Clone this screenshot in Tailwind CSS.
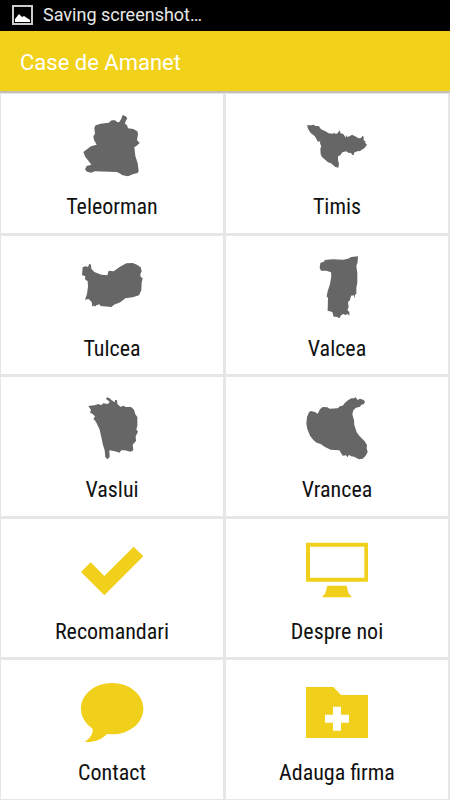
<!DOCTYPE html>
<html lang="ro">
<head>
    <meta charset="UTF-8">
    <meta name="viewport" content="width=device-width, initial-scale=1.0">
    <title>Case de Amanet</title>
    <script src="https://cdn.jsdelivr.net/npm/@tailwindcss/browser@4"></script>
</head>
<body class="min-h-screen flex flex-col bg-[#e6e6e6] font-['Roboto',sans-serif]">
    <!-- Status bar -->
    <div class="h-[31px] shrink-0 bg-black text-[#e8e8e8] flex items-center px-3 pb-px gap-2.5">
        <svg class="w-[21px] h-5" viewBox="0 0 21 20" aria-hidden="true">
            <rect x="1" y="1" width="19" height="18" fill="none" stroke="#ccc" stroke-width="2"/>
            <path d="M3 17V14L7 9L10 12L12 11L18 15V17Z" fill="#fff"/>
        </svg>
        <span class="text-[18px] leading-6">Saving screenshot…</span>
    </div>

    <!-- Action bar -->
    <header class="h-[62px] shrink-0 bg-[#f2d11b] border-b-2 border-[#c4c1b4] flex items-center px-5 pt-1">
        <h1 class="text-[22px] leading-7 text-white">Case de Amanet</h1>
    </header>

    <!-- Menu grid -->
    <main class="flex-1 grid grid-cols-2 auto-rows-fr gap-[3px] pl-px pr-0.5 py-px text-[#111] text-[22px] leading-7 font-['Roboto_Condensed','Roboto',sans-serif]">
        <a href="#teleorman" class="bg-white flex flex-col items-center gap-0.5 pt-[7px] pb-2">
            <svg class="w-[90px] h-[90px]" viewBox="-9 0 270 270" fill="#666" aria-hidden="true">
                <path d="M77 73L92 68L116 65L125 58L135 58L142 64L148 63L154 53L158 42L167 46L172 52L166 62L165 68L171 73L174 82L190 84L202 91L204 99L201 117L209 126L200 134L193 139L196 165L203 187L206 210L203 216L188 220L174 226L158 223L147 216L140 213L74 211L64 215L51 212L45 205L50 195L64 191L54 178L46 168L40 153L55 142L63 136L80 131L72 117L70 106L75 98L73 80Z"/>
            </svg>
            <span>Teleorman</span>
        </a>
        <a href="#timis" class="bg-white flex flex-col items-center gap-0.5 pt-[7px] pb-2">
            <svg class="w-[90px] h-[90px]" viewBox="-9 0 270 270" fill="#666" aria-hidden="true">
                <path d="M36 73L49 73L56 71L61 75L71 75L78 85L90 90L101 97L114 98L118 95L122 99L128 97L133 88L137 97L145 99L150 107L151 112L153 102L156 108L164 106L171 101L185 108L190 112L198 111L203 104L206 108L206 118L211 121L211 126L216 131L208 142L199 147L195 151L190 150L183 152L177 155L177 161L172 162L168 156L160 155L153 151L142 154L136 163L129 166L129 178L132 188L130 200L121 198L108 187L99 184L81 168L77 160L76 142L79 137L75 127L76 121L69 122L59 105L47 96L39 83Z"/>
            </svg>
            <span>Timis</span>
        </a>
        <a href="#tulcea" class="bg-white flex flex-col items-center gap-0.5 pt-[7px] pb-2">
            <svg class="w-[90px] h-[90px]" viewBox="-9 0 270 270" fill="#666" aria-hidden="true">
                <path d="M38 73L46 70L54 72L58 62L63 65L64 77L73 87L94 95L112 97L116 83L131 85L150 71L169 61L188 60L201 65L212 73L215 85L211 93L212 102L218 105L215 120L214 142L207 157L188 163L166 166L151 178L132 185L124 192L92 189L88 184L79 187L75 191L71 187L67 192L65 177L56 168L45 170L51 153L54 130L53 115L45 109L46 100L36 96Z"/>
            </svg>
            <span>Tulcea</span>
        </a>
        <a href="#valcea" class="bg-white flex flex-col items-center gap-0.5 pt-[7px] pb-2">
            <svg class="w-[90px] h-[90px]" viewBox="-9 0 270 270" fill="#666" aria-hidden="true">
                <path d="M76 60L89 55L88 51L114 49L145 50L159 47L169 42L189 40L188 57L184 69L187 91L187 119L184 134L184 153L180 155L179 166L176 157L168 158L165 171L159 178L161 193L157 201L163 207L163 218L158 213L151 216L145 213L138 217L133 226L125 221L116 221L112 207L98 203L99 165L95 160L98 145L105 123L109 99L108 88L94 83L78 83L74 75Z"/>
            </svg>
            <span>Valcea</span>
        </a>
        <a href="#vaslui" class="bg-white flex flex-col items-center gap-0.5 pt-[7px] pb-2">
            <svg class="w-[90px] h-[90px]" viewBox="-9 0 270 270" fill="#666" aria-hidden="true">
                <path d="M55 66L73 64L86 60L93 64L100 58L114 60L119 53L108 45L111 40L119 43L125 49L135 55L135 47L141 49L142 60L151 68L162 65L166 69L183 69L192 77L196 91L202 99L202 126L199 136L204 143L197 157L198 171L188 182L190 199L182 203L164 199L154 199L148 206L135 202L118 199L119 218L113 226L106 220L104 199L99 183L94 160L89 137L80 118L74 108L70 106L75 97L65 88L60 87L63 78Z"/>
            </svg>
            <span>Vaslui</span>
        </a>
        <a href="#vrancea" class="bg-white flex flex-col items-center gap-0.5 pt-[7px] pb-2">
            <svg class="w-[90px] h-[90px]" viewBox="-9 0 270 270" fill="#666" aria-hidden="true">
                <path d="M42 85L47 81L60 84L68 89L75 76L83 69L97 70L104 74L128 73L136 66L143 65L150 56L160 48L169 43L178 43L181 39L188 48L195 44L206 48L210 54L206 61L199 62L195 68L183 71L175 79L172 91L177 109L178 123L185 145L194 157L209 172L216 183L215 193L218 204L212 215L203 224L192 226L177 218L168 217L162 212L158 220L153 214L143 215L133 199L107 197L90 189L77 180L65 176L55 168L45 155L37 135L34 119L36 99Z"/>
            </svg>
            <span>Vrancea</span>
        </a>
        <a href="#recomandari" class="bg-white flex flex-col items-center gap-0.5 pt-[7px] pb-2">
            <svg class="w-[90px] h-[90px]" viewBox="-9 0 270 270" fill="#f0d01a" aria-hidden="true">
                <path d="M33 138L62 109L103 150L191 62L220 91L103 208Z"/>
            </svg>
            <span>Recomandari</span>
        </a>
        <a href="#despre" class="bg-white flex flex-col items-center gap-0.5 pt-[7px] pb-2">
            <svg class="w-[90px] h-[90px]" viewBox="-9 0 270 270" fill="#f0d01a" aria-hidden="true">
                <path fill-rule="evenodd" d="M33 50H219V167H33ZM45 62V155H208V62Z"/>
                <path d="M97 179H155L160 201L171 214H81L91 202Z"/>
            </svg>
            <span>Despre noi</span>
        </a>
        <a href="#contact" class="bg-white flex flex-col items-center gap-0.5 pt-[7px] pb-2">
            <svg class="w-[90px] h-[90px]" viewBox="-9 0 270 270" fill="#f0d01a" aria-hidden="true">
                <path d="M126 48C178 48 220 82 220 125C220 168 178 202 126 202L111 201C94 218 75 226 44 225C60 214 72 199 67 184C46 170 33 149 33 125C33 82 75 48 126 48Z"/>
            </svg>
            <span>Contact</span>
        </a>
        <a href="#adauga" class="bg-white flex flex-col items-center gap-0.5 pt-[7px] pb-2">
            <svg class="w-[90px] h-[90px]" viewBox="-9 0 270 270" fill="#f0d01a" aria-hidden="true">
                <path fill-rule="evenodd" d="M33 60H115L138 84H219V213H33ZM114 119V143H90V167H114V191H138V167H162V143H138V119Z"/>
            </svg>
            <span>Adauga firma</span>
        </a>
    </main>
</body>
</html>
